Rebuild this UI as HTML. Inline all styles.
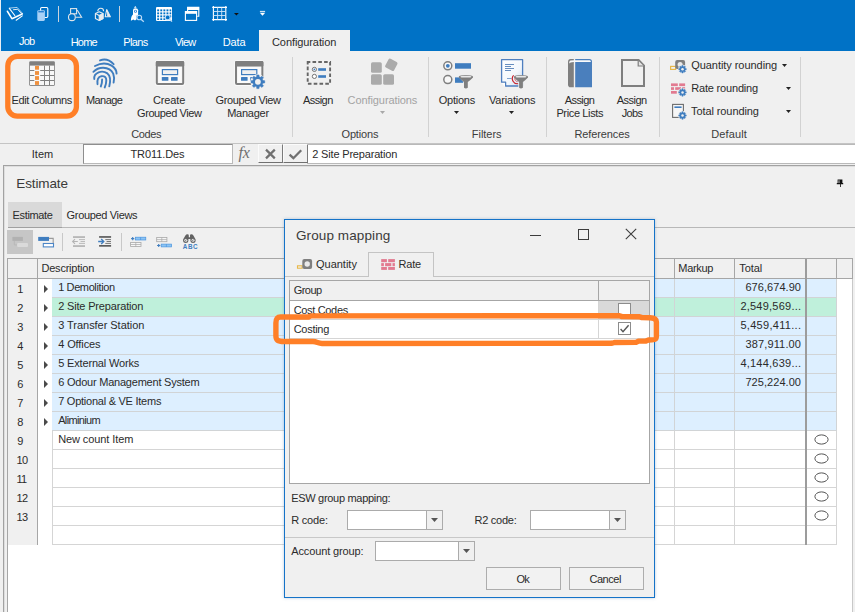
<!DOCTYPE html>
<html><head><meta charset="utf-8"><style>
*{box-sizing:border-box;margin:0;padding:0}
html,body{width:855px;height:612px;overflow:hidden;background:#fff}
body{font-family:"Liberation Sans",sans-serif;font-size:11px;color:#2b2b2b;position:relative}
.a{position:absolute;display:block}
.t{position:absolute;white-space:pre;line-height:1}
</style></head>
<body>
<div class="a" style="left:0px;top:0px;width:855px;height:51px;background:#0072c6;"></div>
<div class="a" style="left:0px;top:51px;width:855px;height:92px;background:#f0f0f0;"></div>
<div class="a" style="left:0px;top:143px;width:855px;height:1px;background:#c4c4c4;"></div>
<div class="a" style="left:0px;top:144px;width:855px;height:21px;background:#f0f0f0;"></div>
<div class="a" style="left:259px;top:30px;width:91px;height:21px;background:#f0f0f0;"></div>
<div class="t" style="left:19.0px;top:35.7px;font-size:11px;letter-spacing:-0.80px;color:#fff;">Job</div>
<div class="t" style="left:70.7px;top:36.7px;font-size:11px;letter-spacing:-0.80px;color:#fff;">Home</div>
<div class="t" style="left:123.3px;top:36.7px;font-size:11px;letter-spacing:-0.63px;color:#fff;">Plans</div>
<div class="t" style="left:175.0px;top:36.7px;font-size:11px;letter-spacing:-0.80px;color:#fff;">View</div>
<div class="t" style="left:222.7px;top:36.7px;font-size:11px;letter-spacing:-0.08px;color:#fff;">Data</div>
<div class="t" style="left:272.0px;top:36.7px;font-size:11px;letter-spacing:-0.09px;color:#2b2b2b;">Configuration</div>
<div class="t" style="left:11.6px;top:94.7px;font-size:11px;letter-spacing:-0.43px;color:#2b2b2b;">Edit Columns</div>
<div class="t" style="left:86.0px;top:94.7px;font-size:11px;letter-spacing:-0.59px;color:#2b2b2b;">Manage</div>
<div class="t" style="left:152.9px;top:94.7px;font-size:11px;letter-spacing:-0.13px;color:#2b2b2b;">Create</div>
<div class="t" style="left:137.0px;top:107.7px;font-size:11px;letter-spacing:-0.42px;color:#2b2b2b;">Grouped View</div>
<div class="t" style="left:215.6px;top:94.7px;font-size:11px;letter-spacing:-0.37px;color:#2b2b2b;">Grouped View</div>
<div class="t" style="left:227.2px;top:107.7px;font-size:11px;letter-spacing:-0.25px;color:#2b2b2b;">Manager</div>
<div class="t" style="left:303.1px;top:94.7px;font-size:11px;letter-spacing:-0.57px;color:#2b2b2b;">Assign</div>
<div class="t" style="left:347.6px;top:94.7px;font-size:11px;letter-spacing:-0.09px;color:#a3a3a3;">Configurations</div>
<div class="t" style="left:438.7px;top:94.7px;font-size:11px;letter-spacing:-0.24px;color:#2b2b2b;">Options</div>
<div class="t" style="left:488.9px;top:94.7px;font-size:11px;letter-spacing:-0.17px;color:#2b2b2b;">Variations</div>
<div class="t" style="left:564.8px;top:94.7px;font-size:11px;letter-spacing:-0.59px;color:#2b2b2b;">Assign</div>
<div class="t" style="left:556.4px;top:107.7px;font-size:11px;letter-spacing:-0.36px;color:#2b2b2b;">Price Lists</div>
<div class="t" style="left:616.8px;top:94.7px;font-size:11px;letter-spacing:-0.53px;color:#2b2b2b;">Assign</div>
<div class="t" style="left:621.8px;top:107.7px;font-size:11px;letter-spacing:-0.68px;color:#2b2b2b;">Jobs</div>
<div class="t" style="left:691.2px;top:59.7px;font-size:11px;letter-spacing:-0.05px;color:#2b2b2b;">Quantity rounding</div>
<div class="t" style="left:691.2px;top:82.7px;font-size:11px;letter-spacing:-0.18px;color:#2b2b2b;">Rate rounding</div>
<div class="t" style="left:691.0px;top:105.7px;font-size:11px;letter-spacing:-0.09px;color:#2b2b2b;">Total rounding</div>
<div class="t" style="left:131.3px;top:128.7px;font-size:11px;letter-spacing:-0.42px;color:#3c3c3c;">Codes</div>
<div class="t" style="left:341.5px;top:128.7px;font-size:11px;letter-spacing:-0.17px;color:#3c3c3c;">Options</div>
<div class="t" style="left:471.8px;top:128.7px;font-size:11px;letter-spacing:-0.04px;color:#3c3c3c;">Filters</div>
<div class="t" style="left:574.4px;top:128.7px;font-size:11px;letter-spacing:-0.11px;color:#3c3c3c;">References</div>
<div class="t" style="left:711.2px;top:128.7px;font-size:11px;letter-spacing:0.14px;color:#3c3c3c;">Default</div>
<div class="a" style="left:292px;top:57px;width:1px;height:80px;background:#d2d2d2;"></div>
<div class="a" style="left:428px;top:57px;width:1px;height:80px;background:#d2d2d2;"></div>
<div class="a" style="left:546px;top:57px;width:1px;height:80px;background:#d2d2d2;"></div>
<div class="a" style="left:659px;top:57px;width:1px;height:80px;background:#d2d2d2;"></div>
<div class="a" style="left:800px;top:57px;width:1px;height:80px;background:#d2d2d2;"></div>
<svg class="a" style="left:379.8px;top:111.0px" width="5" height="3" viewBox="0 0 5 3"><path d="M0 0H5L2.5 3Z" fill="#a8a8a8"/></svg>
<svg class="a" style="left:454.2px;top:110.7px" width="5" height="3" viewBox="0 0 5 3"><path d="M0 0H5L2.5 3Z" fill="#222"/></svg>
<svg class="a" style="left:508.9px;top:110.7px" width="5" height="3" viewBox="0 0 5 3"><path d="M0 0H5L2.5 3Z" fill="#222"/></svg>
<svg class="a" style="left:781.8px;top:63.7px" width="5" height="3" viewBox="0 0 5 3"><path d="M0 0H5L2.5 3Z" fill="#222"/></svg>
<svg class="a" style="left:786.1px;top:86.7px" width="5" height="3" viewBox="0 0 5 3"><path d="M0 0H5L2.5 3Z" fill="#222"/></svg>
<svg class="a" style="left:786.1px;top:109.7px" width="5" height="3" viewBox="0 0 5 3"><path d="M0 0H5L2.5 3Z" fill="#222"/></svg>
<!-- title bar icons -->
<div class="a" style="left:0;top:0;width:1px;height:51px;background:#e8eef5"></div>
<svg class="a" style="left:0;top:0" width="280" height="30" viewBox="0 0 280 30" fill="none">
  <!-- logo -->
  <g stroke="#fff" stroke-linejoin="round" stroke-linecap="round">
    <path d="M7.4 11.3L11.9 18.7L22.2 13.9" stroke-width="1.6"/>
    <path d="M9.3 8.3L14.8 15.5" stroke-width="1.1"/>
    <path d="M9.6 8.1L17.1 7.4L22.5 13.4" stroke-width="0.9" opacity="0.75"/>
    <path d="M13.5 9.7L17.6 9.3L21.4 13.6" stroke-width="1" opacity="0.85"/>
    <path d="M16.2 20.2L22.3 15.9" stroke-width="1.1"/>
  </g>
  <!-- copy -->
  <rect x="40.6" y="7.5" width="7.2" height="10" rx="1.2" stroke="#fff" stroke-width="1.1"/>
  <rect x="37.3" y="10.3" width="7.6" height="10.6" rx="1.3" fill="#a9d1f6"/>
  <rect x="38.3" y="11.1" width="5.6" height="1.3" fill="#1f7ad0"/>
  <!-- sep -->
  <rect x="58" y="6" width="1" height="16" fill="#c9d3dd"/>
  <rect x="119" y="6" width="1" height="16" fill="#c9d3dd"/>
  <!-- 2d shapes -->
  <g stroke="#dfe5ea" stroke-width="1.1">
    <rect x="70.6" y="8.6" width="6" height="5.2"/>
    <path d="M77.2 10L81.6 17.2H75.4"/>
    <circle cx="71.9" cy="17.2" r="3.4" fill="#0072c6"/>
  </g>
  <!-- 3d shapes -->
  <g stroke="#e8ecef" stroke-width="1.1" stroke-linejoin="round">
    <path d="M97.8 11.2A2.9 2.9 0 0 1 103.6 11.2"/>
    <path d="M106.7 9.6L110.4 16.8H105.2Z"/>
    <path d="M107 10.2L110.2 16.6H107.2Z" fill="#e8ecef" stroke="none"/>
    <path d="M95.4 13.6L99.2 11.8L103 13.6V18.4L99.2 20.4L95.4 18.4Z" fill="#0072c6"/>
    <path d="M99.2 15.4L103 13.6V18.4L99.2 20.4Z" fill="#e8ecef"/>
    <path d="M95.4 13.6L99.2 15.4"/>
  </g>
  <!-- rocket -->
  <g fill="#fff">
    <path d="M135.3 6L136.7 7.8H133.9Z"/>
    <path d="M133 10.2Q133 8.3 135.4 8.3Q138.1 8.3 138.1 10.2V15.8H133Z"/>
    <path d="M133 14.6Q131 16 130.9 20.8L133.4 19.4L135 20.6L136.6 19.2V15.4Z"/>
    <circle cx="135.5" cy="11.3" r="1.5" fill="#2a82d6"/>
    <circle cx="135.5" cy="11.3" r="0.7" fill="#fff"/>
  </g>
  <circle cx="139.3" cy="17.5" r="2.3" fill="#0072c6" stroke="#b9daf8" stroke-width="1.1"/>
  <path d="M141 19.3L143.8 21.8" stroke="#b9daf8" stroke-width="1.3"/>
  <!-- table search -->
  <rect x="156" y="7" width="16" height="14" rx="1" fill="#fff"/>
  <g fill="#0072c6">
    <rect x="157.2" y="9.4" width="1.9" height="1.9"/><rect x="160.3" y="9.4" width="1.9" height="1.9"/><rect x="163.4" y="9.4" width="1.9" height="1.9"/><rect x="166.5" y="9.4" width="1.9" height="1.9"/><rect x="169.6" y="9.4" width="1.6" height="1.9"/>
    <rect x="157.2" y="12.4" width="1.9" height="1.9"/><rect x="160.3" y="12.4" width="1.9" height="1.9"/><rect x="163.4" y="12.4" width="1.9" height="1.9"/><rect x="166.5" y="12.4" width="1.9" height="1.9"/><rect x="169.6" y="12.4" width="1.6" height="1.9"/>
    <rect x="157.2" y="15.4" width="1.9" height="1.9"/><rect x="160.3" y="15.4" width="1.9" height="1.9"/><rect x="163.4" y="15.4" width="1.9" height="1.9"/><rect x="166.5" y="15.4" width="1.9" height="1.9"/><rect x="169.6" y="15.4" width="1.6" height="1.9"/>
    <rect x="157.2" y="18.3" width="1.9" height="1.7"/><rect x="160.3" y="18.3" width="1.9" height="1.7"/><rect x="163.4" y="18.3" width="1.9" height="1.7"/>
  </g>
  <circle cx="167.7" cy="17.4" r="2.4" fill="#0072c6" stroke="#b9daf8" stroke-width="1.1"/>
  <path d="M169.5 19.2L172 21.6" stroke="#b9daf8" stroke-width="1.3"/>
  <!-- windows -->
  <path d="M187.6 11V7.4H198.8V16.2H197.2" stroke="#fff" stroke-width="1.1"/>
  <rect x="187.3" y="7.2" width="11.8" height="2.8" fill="#fff"/>
  <rect x="185.4" y="11.6" width="11.2" height="8.8" fill="#0072c6" stroke="#fff" stroke-width="1.1"/>
  <rect x="185" y="11.1" width="12" height="2.7" fill="#fff"/>
  <!-- grid -->
  <g stroke="#fff" stroke-width="1.1">
    <path d="M213.4 6.1V20.9M225.8 6.1V20.9M212.2 7.4H227M212.2 19.6H227"/>
    <path d="M217.6 7.4V19.6M221.7 7.4V19.6M213.4 11.5H225.8M213.4 15.5H225.8" stroke="#cfe4f8" stroke-width="0.9"/>
  </g>
  <path d="M234 12.9H238.8L236.4 15.6Z" fill="#111"/>
  <rect x="259.9" y="10.9" width="5.2" height="0.9" fill="#fff"/>
  <path d="M259.8 12.7H265.2L262.5 15.8Z" fill="#fff"/>
</svg>

<svg class="a" style="left:0;top:52px" width="855" height="91" viewBox="0 52 855 91" fill="none">
<rect x="29.2" y="61.3" width="25.7" height="24.6" rx="1.3" fill="#7f7f7f"/>
<rect x="30" y="65.6" width="24.1" height="19.5" fill="#f7f7f7"/>
<rect x="30" y="70" width="4.3" height="1" fill="#7f7f7f"/><rect x="40.2" y="70" width="13.9" height="1" fill="#7f7f7f"/>
<rect x="30" y="75" width="4.3" height="1" fill="#7f7f7f"/><rect x="40.2" y="75" width="13.9" height="1" fill="#7f7f7f"/>
<rect x="30" y="80" width="4.3" height="1" fill="#7f7f7f"/><rect x="40.2" y="80" width="13.9" height="1" fill="#7f7f7f"/>
<rect x="44" y="65.6" width="1" height="19.5" fill="#7f7f7f"/>
<rect x="49" y="65.6" width="1" height="19.5" fill="#7f7f7f"/>
<rect x="35" y="65.9" width="4" height="3.8" fill="#f0913f"/>
<rect x="35" y="71.1" width="4" height="3.8" fill="#f0913f"/>
<rect x="35" y="76.1" width="4" height="3.8" fill="#f0913f"/>
<rect x="35" y="81.1" width="4" height="3.8" fill="#f0913f"/>
<g stroke="#3f7dbf" stroke-width="1.9" stroke-linecap="round"><path d="M100 60.4Q107.5 57.6 113.6 64.2"/><path d="M95 66Q104 61.2 111.6 65.6Q116.4 68.6 116.6 73.6"/><path d="M93.4 71.8Q97.4 67.6 103.2 67.7Q110.6 68 113.2 73.6Q114.8 77.6 113.6 82.6"/><path d="M94.3 79Q93.6 74.4 98.6 72.3Q103.4 70.6 107.4 73.4Q111.6 76.6 109.3 86.4"/><path d="M97.5 84.2Q96.6 77.4 101.4 76.2Q106.4 75.6 106.3 80.4Q106.2 84.4 104.7 87.5"/><path d="M102.1 79.4Q102.2 83.4 100.8 86.5"/></g>
<rect x="155.20000000000002" y="60.3" width="29.6" height="25.6" rx="2" fill="#fafafa"/><rect x="156.8" y="62" width="26.4" height="22" rx="1" fill="#f0f0f0" stroke="#7f7f7f" stroke-width="2"/><rect x="155.8" y="61" width="28.4" height="5.4" rx="1.2" fill="#7f7f7f"/><rect x="158.4" y="67" width="23.2" height="16" fill="#fafafa"/><rect x="162.4" y="69.6" width="15.2" height="5" fill="#f0f0f0" stroke="#3f7dbf" stroke-width="1.2"/><rect x="161.8" y="77" width="6.6" height="3.8" rx="0.6" fill="#3f7dbf"/><rect x="171.0" y="77" width="6.6" height="3.8" rx="0.6" fill="#3f7dbf"/>
<rect x="234.4" y="60.3" width="29.6" height="25.6" rx="2" fill="#fafafa"/><rect x="236" y="62" width="26.4" height="22" rx="1" fill="#f0f0f0" stroke="#7f7f7f" stroke-width="2"/><rect x="235" y="61" width="28.4" height="5.4" rx="1.2" fill="#7f7f7f"/><rect x="237.6" y="67" width="23.2" height="16" fill="#fafafa"/><rect x="241.6" y="69.6" width="15.2" height="5" fill="#f0f0f0" stroke="#3f7dbf" stroke-width="1.2"/><rect x="241" y="77" width="6.6" height="3.8" rx="0.6" fill="#3f7dbf"/><rect x="250.2" y="77" width="6.6" height="3.8" rx="0.6" fill="#3f7dbf"/>
<circle cx="257.9" cy="81.8" r="7.50" fill="#f0f0f0"/><path d="M256.65 76.75L256.77 74.99L259.03 74.99L259.15 76.75L260.58 77.35L261.91 76.19L263.51 77.79L262.35 79.12L262.95 80.55L264.71 80.67L264.71 82.93L262.95 83.05L262.35 84.48L263.51 85.81L261.91 87.41L260.58 86.25L259.15 86.85L259.03 88.61L256.77 88.61L256.65 86.85L255.22 86.25L253.89 87.41L252.29 85.81L253.45 84.48L252.85 83.05L251.09 82.93L251.09 80.67L252.85 80.55L253.45 79.12L252.29 77.79L253.89 76.19L255.22 77.35Z" fill="#3f7dbf" stroke="#3f7dbf" stroke-width="0.5" stroke-linejoin="round"/><circle cx="257.9" cy="81.8" r="2.9" fill="#f0f0f0"/>
<rect x="307.7" y="62" width="22.4" height="21.8" stroke="#666" stroke-width="1.9" stroke-dasharray="3.6 2.2" stroke-dashoffset="1"/>
<circle cx="314.4" cy="69.4" r="2.1" fill="#fff" stroke="#666" stroke-width="0.9"/><circle cx="314.4" cy="69.4" r="0.9" fill="#3f7dbf"/>
<circle cx="314.4" cy="76.4" r="2.1" fill="#fff" stroke="#666" stroke-width="0.9"/>
<rect x="318.2" y="68.2" width="7.8" height="2.6" fill="#3f7dbf"/><rect x="318.2" y="75.2" width="7.8" height="2.6" fill="#3f7dbf"/>
<rect x="371" y="62.2" width="10.8" height="10.6" rx="1.6" fill="#ababab"/><rect x="371" y="74.2" width="10.8" height="10.6" rx="1.6" fill="#ababab"/><rect x="383.2" y="74.2" width="10.8" height="10.6" rx="1.6" fill="#ababab"/>
<rect x="-5" y="-5" width="10" height="10" rx="1.6" fill="#ababab" transform="translate(391.3 64.8) rotate(28)"/>
<circle cx="447.8" cy="65.8" r="4" fill="#f8f8f8" stroke="#7f7f7f" stroke-width="1.5"/><circle cx="447.8" cy="65.8" r="1.9" fill="#3f7dbf"/>
<circle cx="447.8" cy="79.6" r="4" fill="#f8f8f8" stroke="#7f7f7f" stroke-width="1.5"/>
<rect x="455" y="63.2" width="16" height="5.5" fill="#3f7dbf"/><rect x="455" y="77.4" width="10" height="5.4" fill="#3f7dbf"/>
<path d="M458.2 76.6L473.6 76.6L468.6 81.8V89.1H463.20000000000005V81.8Z" fill="#f0f0f0"/><path d="M458.8 76.8Q458.8 78.4 464.00000000000006 82.072V87.8Q465.90000000000003 89.0 467.8 87.8V82.072Q473.0 78.4 473.0 76.8Z" fill="#7f7f7f"/><ellipse cx="465.90000000000003" cy="76.9" rx="7.1" ry="1.9" fill="#7f7f7f"/><ellipse cx="465.90000000000003" cy="76.7" rx="5.5" ry="0.9" fill="#e8e8e8"/>
<defs><linearGradient id="dg" x1="0" y1="0" x2="1" y2="1"><stop offset="0" stop-color="#ffffff"/><stop offset="0.6" stop-color="#f2f7fc"/><stop offset="1" stop-color="#c6dbf0"/></linearGradient></defs>
<path d="M501.6 59.7H522.6V86H505.6V82.2H501.6Z" fill="url(#dg)" stroke="#4f7fbf" stroke-width="1.3" stroke-linejoin="round"/>
<path d="M501.4 83L505 86.4V83Z" fill="#fdfdfd"/>
<path d="M505 64.5H514M505 66.5H511M505 68.5H514M505 70.5H511" stroke="#5580b8" stroke-width="0.9"/>
<path d="M507 78.5H511.5" stroke="#6f96c8" stroke-width="0.9"/>
<path d="M513.6 75.4A5 5 0 0 0 518.4 83.6" stroke="#c8232c" stroke-width="1.2"/><path d="M515 77.6A3 3 0 0 0 517.6 81.6" stroke="#d9606a" stroke-width="1"/>
<path d="M513.4 76.6L528.6 76.6L523.6999999999999 81.8V89.1H518.3000000000001V81.8Z" fill="#f0f0f0"/><path d="M514 76.8Q514 78.4 519.1 82.072V87.8Q521.0 89.0 522.9 87.8V82.072Q528 78.4 528 76.8Z" fill="#7f7f7f"/><ellipse cx="521.0" cy="76.9" rx="7.0" ry="1.9" fill="#7f7f7f"/><ellipse cx="521.0" cy="76.7" rx="5.4" ry="0.9" fill="#e8e8e8"/>
<path d="M573.8 59H570.6Q568 59 568 62V84.4Q568 87.2 570.6 87.2H573.8Z" fill="#7f7f7f"/>
<path d="M575.2 59H589.4Q592 59 592 61.6V87.2H575.2Z" fill="#4a7fbd"/>
<path d="M570.4 60.6Q569 61 569.2 63.4Q570 61.8 574 61.9H590.9Q590.9 60.3 589.6 60.3H575Z" fill="#fafafa"/>
<path d="M622 60H638.6L644 65.6V86H622Z" stroke="#7f7f7f" stroke-width="2" stroke-linejoin="miter"/>
<path d="M638.2 60.6V66H643.6" stroke="#7f7f7f" stroke-width="1.2" fill="#e4e4e4"/>
<rect x="670.6" y="66.4" width="5" height="3" fill="none" stroke="#e8b84a" stroke-width="1.2"/>
<rect x="675.2" y="60" width="9.9" height="9" rx="2" fill="#7f7f7f"/>
<circle cx="680.1" cy="64.6" r="2.5" fill="#e9e9e9"/>
<circle cx="682.5" cy="69.2" r="4.40" fill="#f0f0f0"/><path d="M681.82 66.48L681.88 65.45L683.12 65.45L683.18 66.48L683.94 66.80L684.71 66.11L685.59 66.99L684.90 67.76L685.22 68.52L686.25 68.58L686.25 69.82L685.22 69.88L684.90 70.64L685.59 71.41L684.71 72.29L683.94 71.60L683.18 71.92L683.12 72.95L681.88 72.95L681.82 71.92L681.06 71.60L680.29 72.29L679.41 71.41L680.10 70.64L679.78 69.88L678.75 69.82L678.75 68.58L679.78 68.52L680.10 67.76L679.41 66.99L680.29 66.11L681.06 66.80Z" fill="#3f7dbf" stroke="#3f7dbf" stroke-width="0.5" stroke-linejoin="round"/><circle cx="682.5" cy="69.2" r="1.25" fill="#f0f0f0"/>
<rect x="671" y="83.4" width="6.8" height="2.7" fill="#e27a90"/>
<rect x="679.2" y="83.4" width="5.9" height="2.7" fill="#e27a90"/>
<rect x="671" y="87.2" width="3" height="2.7" fill="#e27a90"/>
<rect x="675.2" y="87.2" width="5.8" height="2.7" fill="#e27a90"/>
<rect x="682.2" y="87.2" width="2.9" height="2.7" fill="#e27a90"/>
<rect x="671" y="91" width="5.8" height="2.7" fill="#e27a90"/>
<rect x="678" y="91" width="3" height="2.7" fill="#e27a90"/>
<circle cx="682.5" cy="92.4" r="4.40" fill="#f0f0f0"/><path d="M681.82 89.68L681.88 88.65L683.12 88.65L683.18 89.68L683.94 90.00L684.71 89.31L685.59 90.19L684.90 90.96L685.22 91.72L686.25 91.78L686.25 93.02L685.22 93.08L684.90 93.84L685.59 94.61L684.71 95.49L683.94 94.80L683.18 95.12L683.12 96.15L681.88 96.15L681.82 95.12L681.06 94.80L680.29 95.49L679.41 94.61L680.10 93.84L679.78 93.08L678.75 93.02L678.75 91.78L679.78 91.72L680.10 90.96L679.41 90.19L680.29 89.31L681.06 90.00Z" fill="#3f7dbf" stroke="#3f7dbf" stroke-width="0.5" stroke-linejoin="round"/><circle cx="682.5" cy="92.4" r="1.25" fill="#f0f0f0"/>
<rect x="672.6" y="104.4" width="10.8" height="13" fill="#f6f6f6" stroke="#6c6c6c" stroke-width="1.1"/>
<rect x="674.4" y="106.4" width="7.2" height="1.6" fill="#3f7dbf"/>
<circle cx="682.5" cy="115.5" r="4.40" fill="#f0f0f0"/><path d="M681.82 112.78L681.88 111.75L683.12 111.75L683.18 112.78L683.94 113.10L684.71 112.41L685.59 113.29L684.90 114.06L685.22 114.82L686.25 114.88L686.25 116.12L685.22 116.18L684.90 116.94L685.59 117.71L684.71 118.59L683.94 117.90L683.18 118.22L683.12 119.25L681.88 119.25L681.82 118.22L681.06 117.90L680.29 118.59L679.41 117.71L680.10 116.94L679.78 116.18L678.75 116.12L678.75 114.88L679.78 114.82L680.10 114.06L679.41 113.29L680.29 112.41L681.06 113.10Z" fill="#3f7dbf" stroke="#3f7dbf" stroke-width="0.5" stroke-linejoin="round"/><circle cx="682.5" cy="115.5" r="1.25" fill="#f0f0f0"/>
</svg>
<div class="t" style="left:31.8px;top:148.7px;font-size:11px;letter-spacing:-0.00px;color:#2b2b2b;">Item</div>
<div class="a" style="left:83px;top:144px;width:150px;height:20px;background:#fff;border:1px solid #b9b9b9;border-left-color:#8e8e8e;border-top-color:#8e8e8e"></div>
<div class="t" style="left:130.5px;top:148.7px;font-size:11px;letter-spacing:-0.10px;color:#2b2b2b;">TR011.Des</div>
<div class="a" style="left:307px;top:144px;width:548px;height:20px;background:#fff;border-top:1px solid #b9b9b9;border-bottom:1px solid #b9b9b9"></div>
<div class="t" style="left:312.3px;top:148.7px;font-size:11px;letter-spacing:-0.18px;color:#2b2b2b;">2 Site Preparation</div>
<div class="t" style="left:238.5px;top:144.6px;font-family:'Liberation Serif',serif;font-style:italic;font-size:16px;color:#6e6e6e;letter-spacing:-0.3px">fx</div>
<div class="a" style="left:258px;top:144px;width:25px;height:19px;background:#f0f0f0;border-top:1px solid #fbfbfb;border-left:1px solid #fbfbfb;border-right:1px solid #7a7a7a;border-bottom:1.5px solid #707070"></div>
<div class="a" style="left:283px;top:144px;width:25px;height:19px;background:#f0f0f0;border-top:1px solid #fbfbfb;border-left:1px solid #fbfbfb;border-right:1px solid #7a7a7a;border-bottom:1.5px solid #707070"></div>
<svg class="a" style="left:258px;top:144px" width="50" height="19" viewBox="258 144 50 19" fill="none">
<path d="M266 149.6L274.8 158.4M274.8 149.6L266 158.4" stroke="#707070" stroke-width="2.2"/>
<path d="M289.6 154.6L293.4 158.2L301.2 150.2" stroke="#707070" stroke-width="2.3"/>
</svg>

<div class="a" style="left:0px;top:165px;width:3px;height:447px;background:#f0f0f0;"></div>
<div class="a" style="left:3px;top:165px;width:852px;height:447px;background:#f0f0f0;border-left:1px solid #a2a2a2;border-top:1px solid #a2a2a2"></div>
<div class="a" style="left:4px;top:166px;width:851px;height:1px;background:#dedede;"></div>
<div class="a" style="left:4px;top:166px;width:1px;height:446px;background:#dedede;"></div>
<div class="t" style="left:16.3px;top:176.6px;font-size:13.5px;letter-spacing:-0.13px;color:#3a3a3a;">Estimate</div>
<div class="a" style="left:8px;top:202px;width:54px;height:25px;background:#d9d9d9;"></div>
<div class="t" style="left:12.6px;top:209.7px;font-size:11px;letter-spacing:-0.37px;color:#2b2b2b;">Estimate</div>
<div class="t" style="left:66.6px;top:209.7px;font-size:11px;letter-spacing:-0.34px;color:#2b2b2b;">Grouped Views</div>
<div class="a" style="left:8px;top:227px;width:847px;height:1px;background:#b8b8b8;"></div>
<div class="a" style="left:8px;top:227px;width:54px;height:1px;background:#a0a0a0;"></div>
<div class="a" style="left:7px;top:230px;width:26px;height:24px;background:#c6c6c6;"></div>
<div class="a" style="left:62px;top:233px;width:1px;height:18px;background:#c8c8c8;"></div>
<div class="a" style="left:121px;top:233px;width:1px;height:18px;background:#c8c8c8;"></div>
<svg class="a" style="left:0;top:228px" width="210" height="30" viewBox="0 228 210 30" fill="none">
<!-- btn1 disabled icon -->
<rect x="12.4" y="236.9" width="10.5" height="4" fill="#b1b1b1"/>
<path d="M14.3 240.9V244.9H17.2" stroke="#b8b8b8" stroke-width="1"/>
<rect x="17.1" y="243" width="10.9" height="4" rx="1" fill="#dadada"/>
<!-- btn2 -->
<rect x="38.2" y="236.9" width="10.8" height="4" fill="#3f7dbf"/>
<path d="M49 238.4H53.2V243" stroke="#9a9a9a" stroke-width="1.1"/>
<rect x="43.3" y="243.5" width="10.2" height="3.4" fill="#fff" stroke="#4c86c6" stroke-width="1.1"/>
<!-- outdent -->
<rect x="73" y="236.3" width="12" height="1.5" fill="#ababab"/>
<rect x="73" y="245.3" width="12" height="1.5" fill="#ababab"/>
<path d="M79 239.6H85M80.5 241.5H85M79 243.4H85" stroke="#b4b4b4" stroke-width="0.9"/>
<path d="M72.6 241.5H77.8M75 239.2L72.6 241.5L75 243.8" stroke="#b4b4b4" stroke-width="1.1"/>
<!-- indent -->
<rect x="99.1" y="236.1" width="12" height="1.7" fill="#5c5c5c"/>
<rect x="99.1" y="245" width="12" height="1.7" fill="#5c5c5c"/>
<path d="M105.3 239.6H111M106.6 241.5H111M105.3 243.4H111" stroke="#6a6a6a" stroke-width="0.9"/>
<path d="M98.2 241.5H103.6M101.2 239L103.8 241.5L101.2 244" stroke="#3f7dbf" stroke-width="1.3"/>
<!-- insert above -->
<path d="M131.1 238.6H134.3M132.7 237V240.2" stroke="#3f7dbf" stroke-width="1.1"/>
<rect x="135.4" y="237.2" width="10.4" height="2.8" fill="#8cc4f4" stroke="#4a94de" stroke-width="0.7"/>
<path d="M140.6 237.2V240" stroke="#4a94de" stroke-width="0.7"/>
<rect x="130.6" y="242.4" width="10.4" height="4.2" fill="#f6f6f6" stroke="#a8a8a8" stroke-width="0.8"/>
<path d="M130.6 244.5H141M135.8 242.4V246.6" stroke="#a8a8a8" stroke-width="0.7"/>
<!-- insert below -->
<rect x="156.7" y="237.5" width="10.2" height="4.2" fill="#f6f6f6" stroke="#a8a8a8" stroke-width="0.8"/>
<path d="M156.7 239.6H166.9M161.8 237.5V241.7" stroke="#a8a8a8" stroke-width="0.7"/>
<path d="M157.1 245.5H160.3M158.7 243.9V247.1" stroke="#3f7dbf" stroke-width="1.1"/>
<rect x="161.2" y="244.1" width="10.4" height="2.8" fill="#8cc4f4" stroke="#4a94de" stroke-width="0.7"/>
<path d="M166.4 244.1V246.9" stroke="#4a94de" stroke-width="0.7"/>
<!-- binoculars -->
<g fill="#626262">
<path d="M185.4 235.6Q186 234.2 187.6 234.2Q188.8 234.2 188.8 235.4V237.2H190V235.4Q190 234.2 191.2 234.2Q192.8 234.2 193.4 235.6L195.6 239.6V241Q195.6 242.9 193 242.9Q190.6 242.9 190.4 241V239H188.4V241Q188.2 242.9 185.8 242.9Q183.1 242.9 183.1 241V239.6Z"/>
</g>
<circle cx="185.8" cy="240.3" r="1.5" fill="#e4e4e4"/><circle cx="193" cy="240.3" r="1.5" fill="#e4e4e4"/>
<path d="M184.9 240.9L186.6 239.6M192.1 240.9L193.8 239.6" stroke="#626262" stroke-width="0.7"/>
</svg>
<div class="t" style="left:182.8px;top:243.6px;font-size:6.3px;font-weight:bold;color:#3f7dbf;letter-spacing:0.55px">ABC</div>
<!-- pin -->
<svg class="a" style="left:835px;top:178px" width="10" height="10" viewBox="835 178 10 10"><path d="M838.6 179.4H842.4V183H843.2V184.2H840.9V187H840.1V184.2H836.8V183H837.6V179.4Z M838.6 180.2V183H839.4V180.2Z" fill="#111" fill-rule="evenodd"/></svg>

<div class="a" style="left:8px;top:259px;width:844px;height:353px;background:#fff;"></div>
<div class="a" style="left:852px;top:228px;width:3px;height:384px;background:#f0f0f0;"></div>
<div class="a" style="left:852px;top:258px;width:1px;height:354px;background:#c8c8c8;"></div>
<div class="a" style="left:7px;top:258px;width:846px;height:1px;background:#a6a6a6;"></div>
<div class="a" style="left:7px;top:258px;width:1px;height:354px;background:#a6a6a6;"></div>
<div class="a" style="left:8px;top:259px;width:844px;height:19px;background:#f0f0f0;"></div>
<div class="a" style="left:8px;top:278px;width:845px;height:1px;background:#a6a6a6;"></div>
<div class="a" style="left:8px;top:279px;width:29px;height:266px;background:#f0f0f0;"></div>
<div class="a" style="left:37px;top:259px;width:1px;height:286px;background:#a6a6a6;"></div>
<div class="t" style="left:41.5px;top:262.7px;font-size:11px;letter-spacing:-0.22px;color:#2b2b2b;">Description</div>
<div class="t" style="left:678.3px;top:262.7px;font-size:11px;letter-spacing:-0.30px;color:#2b2b2b;">Markup</div>
<div class="t" style="left:739.2px;top:262.7px;font-size:11px;letter-spacing:-0.06px;color:#2b2b2b;">Total</div>
<div class="a" style="left:674px;top:259px;width:1px;height:19px;background:#a6a6a6;"></div>
<div class="a" style="left:734px;top:259px;width:1px;height:19px;background:#a6a6a6;"></div>
<div class="a" style="left:836px;top:259px;width:1px;height:19px;background:#a6a6a6;"></div>
<div class="a" style="left:852px;top:259px;width:1px;height:19px;background:#a6a6a6;"></div>
<div class="a" style="left:52px;top:279px;width:785px;height:18px;background:#ddefff;"></div>
<svg class="a" style="left:44px;top:285px" width="4" height="8" viewBox="0 0 4 8"><path d="M0 0L4 4L0 8Z" fill="#4a4a4a"/></svg>
<div class="a" style="left:52px;top:297px;width:785px;height:1px;background:#d1d4d6;"></div>
<div class="t" style="left:17.2px;top:283.7px;font-size:11px;letter-spacing:-0.80px;color:#2b2b2b;">1</div>
<div class="t" style="left:58.2px;top:281.7px;font-size:11px;letter-spacing:-0.39px;color:#2b2b2b;">1 Demolition</div>
<div class="t" style="left:745.4px;top:281.7px;font-size:11px;letter-spacing:0.06px;color:#2b2b2b;">676,674.90</div>
<div class="a" style="left:52px;top:298px;width:785px;height:18px;background:#bff0db;"></div>
<svg class="a" style="left:44px;top:304px" width="4" height="8" viewBox="0 0 4 8"><path d="M0 0L4 4L0 8Z" fill="#4a4a4a"/></svg>
<div class="a" style="left:52px;top:316px;width:785px;height:1px;background:#d1d4d6;"></div>
<div class="t" style="left:17.2px;top:302.7px;font-size:11px;letter-spacing:-0.80px;color:#2b2b2b;">2</div>
<div class="t" style="left:58.2px;top:300.7px;font-size:11px;letter-spacing:-0.17px;color:#2b2b2b;">2 Site Preparation</div>
<div class="t" style="left:740.4px;top:300.7px;font-size:11px;letter-spacing:0.23px;color:#2b2b2b;">2,549,569...</div>
<div class="a" style="left:52px;top:317px;width:785px;height:18px;background:#ddefff;"></div>
<svg class="a" style="left:44px;top:323px" width="4" height="8" viewBox="0 0 4 8"><path d="M0 0L4 4L0 8Z" fill="#4a4a4a"/></svg>
<div class="a" style="left:52px;top:335px;width:785px;height:1px;background:#d1d4d6;"></div>
<div class="t" style="left:17.2px;top:321.7px;font-size:11px;letter-spacing:-0.80px;color:#2b2b2b;">3</div>
<div class="t" style="left:58.2px;top:319.7px;font-size:11px;letter-spacing:-0.04px;color:#2b2b2b;">3 Transfer Station</div>
<div class="t" style="left:740.4px;top:319.7px;font-size:11px;letter-spacing:0.30px;color:#2b2b2b;">5,459,411...</div>
<div class="a" style="left:52px;top:336px;width:785px;height:18px;background:#ddefff;"></div>
<svg class="a" style="left:44px;top:342px" width="4" height="8" viewBox="0 0 4 8"><path d="M0 0L4 4L0 8Z" fill="#4a4a4a"/></svg>
<div class="a" style="left:52px;top:354px;width:785px;height:1px;background:#d1d4d6;"></div>
<div class="t" style="left:17.2px;top:340.7px;font-size:11px;letter-spacing:-0.80px;color:#2b2b2b;">4</div>
<div class="t" style="left:58.2px;top:338.7px;font-size:11px;letter-spacing:-0.10px;color:#2b2b2b;">4 Offices</div>
<div class="t" style="left:745.4px;top:338.7px;font-size:11px;letter-spacing:0.15px;color:#2b2b2b;">387,911.00</div>
<div class="a" style="left:52px;top:355px;width:785px;height:18px;background:#ddefff;"></div>
<svg class="a" style="left:44px;top:361px" width="4" height="8" viewBox="0 0 4 8"><path d="M0 0L4 4L0 8Z" fill="#4a4a4a"/></svg>
<div class="a" style="left:52px;top:373px;width:785px;height:1px;background:#d1d4d6;"></div>
<div class="t" style="left:17.2px;top:359.7px;font-size:11px;letter-spacing:-0.80px;color:#2b2b2b;">5</div>
<div class="t" style="left:58.2px;top:357.7px;font-size:11px;letter-spacing:-0.16px;color:#2b2b2b;">5 External Works</div>
<div class="t" style="left:740.4px;top:357.7px;font-size:11px;letter-spacing:0.23px;color:#2b2b2b;">4,144,639...</div>
<div class="a" style="left:52px;top:374px;width:785px;height:18px;background:#ddefff;"></div>
<svg class="a" style="left:44px;top:380px" width="4" height="8" viewBox="0 0 4 8"><path d="M0 0L4 4L0 8Z" fill="#4a4a4a"/></svg>
<div class="a" style="left:52px;top:392px;width:785px;height:1px;background:#d1d4d6;"></div>
<div class="t" style="left:17.2px;top:378.7px;font-size:11px;letter-spacing:-0.80px;color:#2b2b2b;">6</div>
<div class="t" style="left:58.2px;top:376.7px;font-size:11px;letter-spacing:-0.22px;color:#2b2b2b;">6 Odour Management System</div>
<div class="t" style="left:745.4px;top:376.7px;font-size:11px;letter-spacing:0.06px;color:#2b2b2b;">725,224.00</div>
<div class="a" style="left:52px;top:393px;width:785px;height:18px;background:#ddefff;"></div>
<svg class="a" style="left:44px;top:399px" width="4" height="8" viewBox="0 0 4 8"><path d="M0 0L4 4L0 8Z" fill="#4a4a4a"/></svg>
<div class="a" style="left:52px;top:411px;width:785px;height:1px;background:#d1d4d6;"></div>
<div class="t" style="left:17.2px;top:397.7px;font-size:11px;letter-spacing:-0.80px;color:#2b2b2b;">7</div>
<div class="t" style="left:58.2px;top:395.7px;font-size:11px;letter-spacing:-0.25px;color:#2b2b2b;">7 Optional &amp; VE Items</div>
<div class="a" style="left:52px;top:412px;width:785px;height:18px;background:#ddefff;"></div>
<svg class="a" style="left:44px;top:418px" width="4" height="8" viewBox="0 0 4 8"><path d="M0 0L4 4L0 8Z" fill="#4a4a4a"/></svg>
<div class="a" style="left:52px;top:430px;width:785px;height:1px;background:#d1d4d6;"></div>
<div class="t" style="left:17.2px;top:416.7px;font-size:11px;letter-spacing:-0.80px;color:#2b2b2b;">8</div>
<div class="t" style="left:58.2px;top:414.7px;font-size:11px;letter-spacing:-0.66px;color:#2b2b2b;">Aliminium</div>
<div class="a" style="left:52px;top:449px;width:785px;height:1px;background:#d5d5d5;"></div>
<div class="t" style="left:17.2px;top:435.7px;font-size:11px;letter-spacing:-0.80px;color:#2b2b2b;">9</div>
<div class="t" style="left:58.2px;top:433.7px;font-size:11px;letter-spacing:-0.10px;color:#2b2b2b;">New count Item</div>
<svg class="a" style="left:814px;top:434px" width="15" height="11" viewBox="0 0 15 11"><ellipse cx="7.5" cy="5.5" rx="6.6" ry="4.6" fill="#fff" stroke="#555" stroke-width="1"/></svg>
<div class="a" style="left:52px;top:468px;width:785px;height:1px;background:#d5d5d5;"></div>
<div class="t" style="left:16.6px;top:454.7px;font-size:11px;letter-spacing:-0.80px;color:#2b2b2b;">10</div>
<svg class="a" style="left:814px;top:453px" width="15" height="11" viewBox="0 0 15 11"><ellipse cx="7.5" cy="5.5" rx="6.6" ry="4.6" fill="#fff" stroke="#555" stroke-width="1"/></svg>
<div class="a" style="left:52px;top:487px;width:785px;height:1px;background:#d5d5d5;"></div>
<div class="t" style="left:16.6px;top:473.7px;font-size:11px;letter-spacing:-0.80px;color:#2b2b2b;">11</div>
<svg class="a" style="left:814px;top:472px" width="15" height="11" viewBox="0 0 15 11"><ellipse cx="7.5" cy="5.5" rx="6.6" ry="4.6" fill="#fff" stroke="#555" stroke-width="1"/></svg>
<div class="a" style="left:52px;top:506px;width:785px;height:1px;background:#d5d5d5;"></div>
<div class="t" style="left:16.6px;top:492.7px;font-size:11px;letter-spacing:-0.80px;color:#2b2b2b;">12</div>
<svg class="a" style="left:814px;top:491px" width="15" height="11" viewBox="0 0 15 11"><ellipse cx="7.5" cy="5.5" rx="6.6" ry="4.6" fill="#fff" stroke="#555" stroke-width="1"/></svg>
<div class="a" style="left:52px;top:525px;width:785px;height:1px;background:#d5d5d5;"></div>
<div class="t" style="left:16.6px;top:511.7px;font-size:11px;letter-spacing:-0.80px;color:#2b2b2b;">13</div>
<svg class="a" style="left:814px;top:510px" width="15" height="11" viewBox="0 0 15 11"><ellipse cx="7.5" cy="5.5" rx="6.6" ry="4.6" fill="#fff" stroke="#555" stroke-width="1"/></svg>
<div class="a" style="left:52px;top:544px;width:785px;height:1px;background:#d5d5d5;"></div>
<div class="a" style="left:674px;top:279px;width:1px;height:152px;background:#d1d4d6;"></div>
<div class="a" style="left:674px;top:431px;width:1px;height:114px;background:#d5d5d5;"></div>
<div class="a" style="left:734px;top:279px;width:1px;height:152px;background:#d1d4d6;"></div>
<div class="a" style="left:734px;top:431px;width:1px;height:114px;background:#d5d5d5;"></div>
<div class="a" style="left:836px;top:279px;width:1px;height:152px;background:#d1d4d6;"></div>
<div class="a" style="left:836px;top:431px;width:1px;height:114px;background:#d5d5d5;"></div>
<div class="a" style="left:52px;top:431px;width:1px;height:114px;background:#d5d5d5;"></div>
<div class="a" style="left:805px;top:259px;width:2px;height:286px;background:#9c9c9c;"></div>
<div class="a" style="left:284px;top:219px;width:371px;height:379px;background:#f0f0f0;border:1px solid #1573c8;box-shadow:0 0 3px rgba(60,110,160,.35)"></div>
<div class="t" style="left:296.0px;top:228.6px;font-size:13.5px;letter-spacing:0.10px;color:#3a3a3a;">Group mapping</div>
<div class="a" style="left:530px;top:235px;width:11px;height:1px;background:#3c3c3c;"></div>
<div class="a" style="left:578px;top:229px;width:11px;height:11px;background:transparent;border:1px solid #3c3c3c"></div>
<svg class="a" style="left:625px;top:228px" width="12" height="12" viewBox="0 0 12 12"><path d="M0.8 0.8L11.2 11.2M11.2 0.8L0.8 11.2" stroke="#3c3c3c" stroke-width="1.1" fill="none"/></svg>
<div class="a" style="left:285px;top:276px;width:369px;height:1px;background:#c4c4c4;"></div>
<div class="a" style="left:368px;top:252px;width:66px;height:25px;background:#f0f0f0;border:1px solid #c4c4c4;border-bottom:none"></div>
<div class="t" style="left:316.0px;top:258.7px;font-size:11px;letter-spacing:-0.01px;color:#2b2b2b;">Quantity</div>
<div class="t" style="left:398.5px;top:258.7px;font-size:11px;letter-spacing:-0.18px;color:#2b2b2b;">Rate</div>
<svg class="a" style="left:290px;top:255px" width="110" height="18" viewBox="290 255 110 18" fill="none">
<rect x="297.5" y="265.8" width="4.6" height="2.4" stroke="#e8b84a" stroke-width="1.1"/>
<rect x="302.3" y="259.1" width="9.8" height="9.9" rx="2" fill="#7f7f7f"/>
<circle cx="307.2" cy="264" r="2.7" fill="#e9e9e9"/>
<g fill="#e27a90">
<rect x="381.2" y="259.1" width="5.7" height="3.1"/><rect x="388.2" y="259.1" width="6.7" height="3.1"/>
<rect x="381.2" y="263.1" width="2.7" height="3.1"/><rect x="385.1" y="263.1" width="6.2" height="3.1"/><rect x="392.5" y="263.1" width="2.4" height="3.1"/>
<rect x="381.2" y="267" width="5.7" height="2.9"/><rect x="388.2" y="267" width="6.7" height="2.9"/>
</g>
</svg>

<div class="a" style="left:289px;top:280px;width:361px;height:204px;background:#fff;border:1px solid #a6a6a6"></div>
<div class="a" style="left:290px;top:281px;width:359px;height:19px;background:#f0f0f0;"></div>
<div class="a" style="left:290px;top:300px;width:359px;height:1px;background:#a6a6a6;"></div>
<div class="a" style="left:598px;top:281px;width:1px;height:19px;background:#a6a6a6;"></div>
<div class="a" style="left:598px;top:301px;width:1px;height:37px;background:#d5d5d5;"></div>
<div class="a" style="left:599px;top:301px;width:50px;height:18px;background:#d9d9d9;"></div>
<div class="a" style="left:290px;top:319px;width:359px;height:1px;background:#d5d5d5;"></div>
<div class="a" style="left:290px;top:338px;width:359px;height:1px;background:#d5d5d5;"></div>
<div class="t" style="left:293.7px;top:284.7px;font-size:11px;letter-spacing:-0.52px;color:#2b2b2b;">Group</div>
<div class="t" style="left:293.7px;top:304.7px;font-size:11px;letter-spacing:-0.33px;color:#2b2b2b;">Cost Codes</div>
<div class="t" style="left:293.7px;top:323.7px;font-size:11px;letter-spacing:-0.28px;color:#2b2b2b;">Costing</div>
<div class="a" style="left:618px;top:303px;width:13px;height:14px;background:#fff;border:1px solid #8c8c8c"></div>
<div class="a" style="left:618px;top:322px;width:13px;height:13px;background:#fff;border:1px solid #8c8c8c"></div>
<svg class="a" style="left:618px;top:322px" width="13" height="13" viewBox="0 0 13 13"><path d="M2.6 7L5 9.6L10.6 3.2" stroke="#555" stroke-width="1.4" fill="none"/></svg>
<div class="t" style="left:291.2px;top:492.7px;font-size:11px;letter-spacing:-0.30px;color:#2b2b2b;">ESW group mapping:</div>
<div class="t" style="left:291.2px;top:514.7px;font-size:11px;letter-spacing:-0.19px;color:#2b2b2b;">R code:</div>
<div class="t" style="left:474.5px;top:514.7px;font-size:11px;letter-spacing:-0.25px;color:#2b2b2b;">R2 code:</div>
<div class="a" style="left:347px;top:510px;width:96px;height:20px;background:#fff;border:1px solid #ababab"></div>
<div class="a" style="left:426px;top:511px;width:16px;height:18px;background:#f0f0f0;border-left:1px solid #ababab"></div>
<svg class="a" style="left:431.0px;top:518.3px" width="7" height="4" viewBox="0 0 7 4"><path d="M0 0H7L3.5 4Z" fill="#555"/></svg>
<div class="a" style="left:530px;top:510px;width:96px;height:20px;background:#fff;border:1px solid #ababab"></div>
<div class="a" style="left:609px;top:511px;width:16px;height:18px;background:#f0f0f0;border-left:1px solid #ababab"></div>
<svg class="a" style="left:614.0px;top:518.3px" width="7" height="4" viewBox="0 0 7 4"><path d="M0 0H7L3.5 4Z" fill="#555"/></svg>
<div class="a" style="left:285px;top:537px;width:369px;height:1px;background:#c8c8c8;"></div>
<div class="t" style="left:291.2px;top:545.7px;font-size:11px;letter-spacing:-0.12px;color:#2b2b2b;">Account group:</div>
<div class="a" style="left:375px;top:541px;width:100px;height:20px;background:#fff;border:1px solid #ababab"></div>
<div class="a" style="left:458px;top:542px;width:16px;height:18px;background:#f0f0f0;border-left:1px solid #ababab"></div>
<svg class="a" style="left:463.0px;top:549.3px" width="7" height="4" viewBox="0 0 7 4"><path d="M0 0H7L3.5 4Z" fill="#555"/></svg>
<div class="a" style="left:486px;top:567px;width:75px;height:23px;background:#f2f2f2;border:1px solid #adadad"></div>
<div class="a" style="left:569px;top:567px;width:75px;height:23px;background:#f2f2f2;border:1px solid #adadad"></div>
<div class="t" style="left:516.6px;top:573.7px;font-size:11px;letter-spacing:-0.80px;color:#2b2b2b;">Ok</div>
<div class="t" style="left:589.4px;top:573.7px;font-size:11px;letter-spacing:-0.45px;color:#2b2b2b;">Cancel</div>
<svg class="a" style="left:265px;top:300px" width="400" height="60" viewBox="265 300 400 60"><path d="M280.5 317 L308.5 317 L311 315.9 L619.5 315.7 L622 316.6 L639.5 316.7 L642 317.6 L650 317.8 C654 318 656.4 319 656.4 322 L656.4 336.6 C656.4 339.3 655 339.8 652 339.9 L648.5 340 L646 341 L638.5 341.1 L636 342.4 L614.5 342.5 L612 343.3 L322 343.5 C318 343.4 317 341.6 313 341.5 L284 341.5 C277.5 341.4 276 340 275.9 336 L275.9 323 C276 319 277 317 280.5 317 Z" fill="none" stroke="#ff7f27" stroke-width="5.4" stroke-linejoin="round"/></svg>
<svg class="a" style="left:0px;top:50px" width="90" height="75" viewBox="0 50 90 75"><rect x="7.8" y="56.4" width="68.6" height="59.8" rx="9.5" ry="9.5" fill="none" stroke="#ff7f27" stroke-width="5.3"/></svg>
</body></html>
